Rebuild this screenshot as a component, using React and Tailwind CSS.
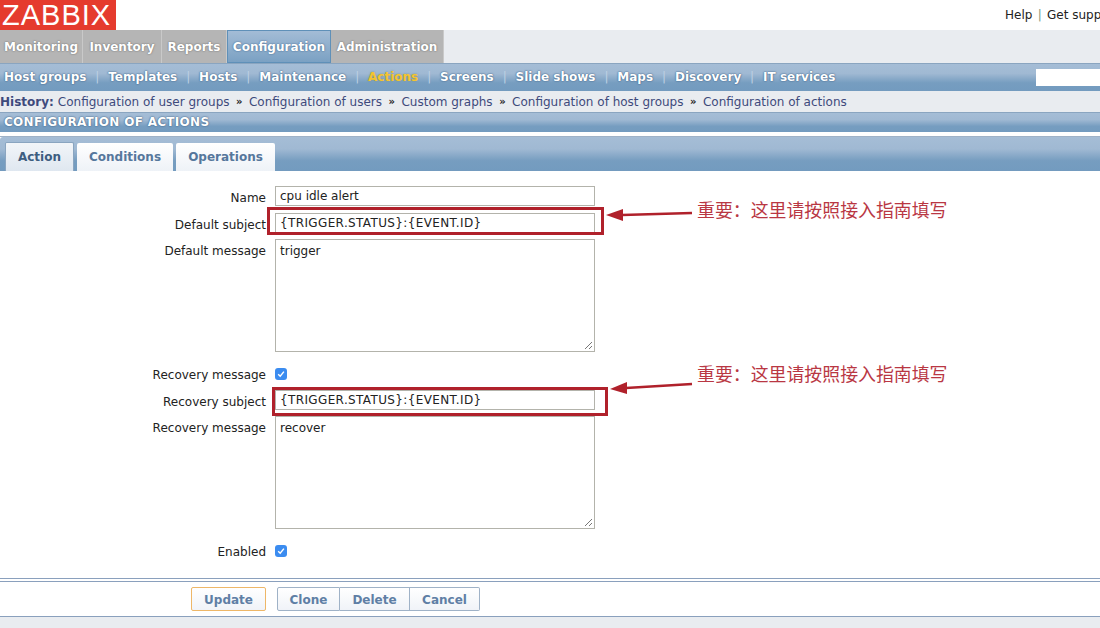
import React from 'react';

const mainTabs = [
  { label: 'Monitoring', w: 'w-[83px]' },
  { label: 'Inventory', w: 'w-[79px]' },
  { label: 'Reports', w: 'w-[65px]' },
  { label: 'Configuration', w: 'w-[104px]', active: true },
  { label: 'Administration', w: 'w-[113px]' },
];

const subLinks = ['Host groups', 'Templates', 'Hosts', 'Maintenance', 'Actions', 'Screens', 'Slide shows', 'Maps', 'Discovery', 'IT services'];
const history = ['Configuration of user groups', 'Configuration of users', 'Custom graphs', 'Configuration of host groups', 'Configuration of actions'];

const barBg = 'bg-[linear-gradient(#a5bdd6_0%,#a0b9d3_35%,#769dc0_70%,#739bbf_100%)]';

const Row = ({ label, top = 'mt-0', labelLeading = 'leading-[24px]', children }) => (
  <div className={`flex ${top}`}>
    <div className={`w-[266px] h-[20px] shrink-0 text-right text-[12px] text-[#222] ${labelLeading}`}>{label}</div>
    <div className="ml-[9px]">{children}</div>
  </div>
);

const TextBox = ({ value, className = '' }) => (
  <div className={`w-[320px] h-[20px] border border-[#b3b3ab] bg-white px-[4px] text-[12px] leading-[19px] text-[#222] ${className}`}>{value}</div>
);

const MessageBox = ({ value }) => (
  <div className="relative w-[320px] h-[113px] border border-[#b3b3ab] bg-white px-[4px] pt-[2px] text-[12px] leading-[18px] text-[#222]">
    {value}
    <svg className="absolute right-[1px] bottom-[1px]" width="9" height="9" viewBox="0 0 9 9">
      <path d="M1 8L8 1M5 8L8 5" stroke="#777" strokeWidth="1" />
    </svg>
  </div>
);

const Check = () => (
  <div className="w-[12px] h-[12px] mt-[3px] rounded-[3px] bg-[#3b8cf0] flex items-center justify-center">
    <svg width="8" height="8" viewBox="0 0 8 8">
      <path d="M1.2 4.3L3.2 6.3L6.9 1.6" fill="none" stroke="white" strokeWidth="1.4" />
    </svg>
  </div>
);

const Btn = ({ children, className }) => (
  <div className={`h-[24px] bg-[linear-gradient(#fff,#f0f3f8)] text-[12px] font-bold leading-[24px] text-[#5f7fa5] text-center ${className}`}>{children}</div>
);

const Callout = ({ box, arrow, head, textPos }) => (
  <>
    <div className={`absolute border-[3px] border-[#b0212b] ${box}`} />
    <svg className="absolute left-0 top-0" width="1100" height="628">
      <line x1={arrow[0]} y1={arrow[1]} x2={arrow[2]} y2={arrow[3]} stroke="#b0212b" strokeWidth="2.5" />
      <polygon points={head} fill="#b0212b" />
    </svg>
    <div className={`absolute text-[17.9px] leading-[20px] text-[#b93743] whitespace-nowrap ${textPos}`}>重要：这里请按照接入指南填写</div>
  </>
);

export default function App() {
  return (
    <div className="relative w-[1100px] h-[628px] overflow-hidden bg-white font-['DejaVu_Sans','Noto_Sans_CJK_SC',sans-serif]">
      <div className="flex h-[30px] justify-between">
        <div className="w-[116px] h-[30px] pl-[2px] bg-[#e53b2e] text-[29px] leading-[31px] text-white font-['Liberation_Sans',sans-serif] tracking-[1px]">ZABBIX</div>
        <div className="w-[95px] shrink-0 whitespace-nowrap overflow-hidden pt-[6px] text-[12px] leading-[18px] text-[#222]">
          Help <span className="text-[#7a9a80] mx-[1.5px]">|</span> Get support
        </div>
      </div>

      <div className="flex h-[33px] bg-[#e9ecf0]">
        {mainTabs.map((t) => (
          <div
            key={t.label}
            className={`${t.w} h-[33px] text-center text-[12px] font-bold leading-[32px] text-white ${
              t.active
                ? 'border border-[#5f90b8] bg-[linear-gradient(#a3bcd6,#7ba1c3)] [text-shadow:0_0_2px_#4f7398,0_0_1px_#4f7398]'
                : 'border-r border-[#c9c9c9] bg-[#b5b5b5] pt-[1px] [text-shadow:0_0_2px_#777,0_0_1px_#777]'
            }`}
          >
            {t.label}
          </div>
        ))}
      </div>

      <div className={`flex h-[28px] items-center justify-between border-t border-[#8aa5c0] ${barBg}`}>
        <div className="flex items-center pl-[4px] pb-[2px] text-[12px] font-bold leading-[24px]">
          {subLinks.map((s, i) => (
            <React.Fragment key={s}>
              {i > 0 && <span className="mx-[8.9px] font-normal text-[#bdd0e3]">|</span>}
              <span className={s === 'Actions' ? 'text-[#f4c430] [text-shadow:0_0_2px_#7d8a70]' : 'text-white [text-shadow:0_0_2px_#3f6388,0_0_1px_#3f6388]'}>{s}</span>
            </React.Fragment>
          ))}
        </div>
        <div className="w-[64px] h-[17px] bg-white" />
      </div>

      <div className="flex h-[21px] items-center bg-[#e9ecf0] text-[12px] leading-[20px] text-[#3e4a7c] whitespace-nowrap">
        <span className="font-bold mr-[4px]">History:</span>
        {history.map((h, i) => (
          <React.Fragment key={h}>
            {i > 0 && <span className="mx-[6.5px] text-[10px] font-bold text-[#222]">»</span>}
            <span>{h}</span>
          </React.Fragment>
        ))}
      </div>

      <div className={`h-[20px] border-t border-[#8aa5c0] pl-[4px] text-[12px] font-bold leading-[19px] tracking-[0.3px] text-white [text-shadow:0_0_2px_#3f6388,0_0_1px_#3f6388] ${barBg}`}>
        CONFIGURATION OF ACTIONS
      </div>

      <div className="h-[5px] border-b border-[#9fb2c7] mb-0 bg-white" />

      <div className={`flex h-[34px] items-end gap-[3px] rounded-tl-[3px] pl-[5px] ${barBg}`}>
        <div className="w-[69px] h-[29px] rounded-t-[2px] border border-[#8aa5c0] border-b-0 bg-[linear-gradient(#f2f5f9,#dfe7f0)] text-center text-[12px] font-bold leading-[29px] text-[#3d5d80]">Action</div>
        <div className="w-[96px] h-[28px] rounded-t-[2px] bg-[linear-gradient(#fff,#eef2f7)] text-center text-[12px] font-bold leading-[29px] text-[#56779c]">Conditions</div>
        <div className="w-[99px] h-[28px] rounded-t-[2px] bg-[linear-gradient(#fff,#eef2f7)] text-center text-[12px] font-bold leading-[29px] text-[#56779c]">Operations</div>
      </div>

      <div className="pt-[15px]">
        <Row label="Name"><TextBox value="cpu idle alert" /></Row>
        <Row label="Default subject" top="mt-[7px]"><TextBox className="tracking-[0.37px]" value="{TRIGGER.STATUS}:{EVENT.ID}" /></Row>
        <Row label="Default message" top="mt-[6px]"><MessageBox value="trigger" /></Row>
        <Row label="Recovery message" top="mt-[13px]" labelLeading="leading-[20px]"><Check /></Row>
        <Row label="Recovery subject" top="mt-[5px]"><TextBox className="tracking-[0.37px]" value="{TRIGGER.STATUS}:{EVENT.ID}" /></Row>
        <Row label="Recovery message" top="mt-[6px]"><MessageBox value="recover" /></Row>
        <Row label="Enabled" top="mt-[13px]" labelLeading="leading-[20px]"><Check /></Row>
      </div>

      <div className="mt-[16px] h-[4px] border-y border-[#8aa0bd]" />

      <div className="flex h-[34px] items-start pt-[5px] pl-[191px]">
        <Btn className="w-[75px] rounded-[2px] border border-[#eeb768]">Update</Btn>
        <div className="ml-[11px] flex rounded-[2px]">
          <Btn className="w-[63px] rounded-l-[2px] border border-[#9fb2c7]">Clone</Btn>
          <Btn className="w-[70px] border-y border-r border-[#9fb2c7]">Delete</Btn>
          <Btn className="w-[70px] rounded-r-[2px] border-y border-r border-[#9fb2c7]">Cancel</Btn>
        </div>
      </div>

      <div className="h-[12px] border-t border-[#8aa0bd] bg-[#e9ecf0]" />

      <Callout box="left-[267px] top-[207px] w-[337px] h-[28px]" arrow={[622, 215, 692, 213]} head="606,215 623,209 623,221" textPos="left-[697px] top-[201px]" />
      <Callout box="left-[272px] top-[387px] w-[336px] h-[29px]" arrow={[626, 388, 692, 384]} head="610,389 627,382 627,394" textPos="left-[697px] top-[365px]" />
    </div>
  );
}
